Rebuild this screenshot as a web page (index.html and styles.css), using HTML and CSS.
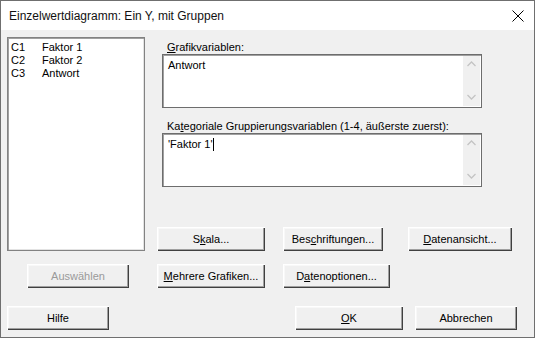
FILE: index.html
```html
<!DOCTYPE html>
<html lang="de">
<head>
<meta charset="utf-8">
<title>Einzelwertdiagramm</title>
<link rel="stylesheet" href="styles.css">
</head>
<body>
<div class="window">
  <div class="titlebar">
    <span class="title">Einzelwertdiagramm: Ein Y, mit Gruppen</span>
    <svg class="close" width="12" height="12" viewBox="0 0 12 12"><path d="M0.5 0.5 L11.5 11.5 M11.5 0.5 L0.5 11.5" stroke="#000" stroke-width="1" fill="none"/></svg>
  </div>
  <div class="content">
    <div class="main">
      <div class="left">
        <div class="listbox">
          <div class="item"><span class="col">C1</span><span>Faktor 1</span></div>
          <div class="item"><span class="col">C2</span><span>Faktor 2</span></div>
          <div class="item"><span class="col">C3</span><span>Antwort</span></div>
        </div>
        <button class="btn btn-select" disabled>Auswählen</button>
      </div>
      <div class="right">
        <div class="label label-first"><u>G</u>rafikvariablen:</div>
        <div class="field">
          <div class="field-text">Antwort</div>
          <div class="scroll">
            <svg width="9" height="6" viewBox="0 0 9 6"><path d="M0.5 5 L4.5 1 L8.5 5" stroke="#c4c4c4" stroke-width="1.3" fill="none"/></svg>
            <svg width="9" height="6" viewBox="0 0 9 6"><path d="M0.5 1 L4.5 5 L8.5 1" stroke="#c4c4c4" stroke-width="1.3" fill="none"/></svg>
          </div>
        </div>
        <div class="label label-second">Ka<u>t</u>egoriale Gruppierungsvariablen (1-4, äußerste zuerst):</div>
        <div class="field">
          <div class="field-text">'Faktor 1'<span class="caret"></span></div>
          <div class="scroll">
            <svg width="9" height="6" viewBox="0 0 9 6"><path d="M0.5 5 L4.5 1 L8.5 5" stroke="#c4c4c4" stroke-width="1.3" fill="none"/></svg>
            <svg width="9" height="6" viewBox="0 0 9 6"><path d="M0.5 1 L4.5 5 L8.5 1" stroke="#c4c4c4" stroke-width="1.3" fill="none"/></svg>
          </div>
        </div>
        <div class="btn-row row-one">
          <button class="btn w108">S<u>k</u>ala...</button>
          <button class="btn w100 gap18">Bes<u>c</u>hriftungen...</button>
          <button class="btn w104 gap25"><u>D</u>atenansicht...</button>
        </div>
        <div class="btn-row row-two">
          <button class="btn w108"><u>M</u>ehrere Grafiken...</button>
          <button class="btn w107 gap18">D<u>a</u>tenoptionen...</button>
        </div>
      </div>
    </div>
    <div class="footer">
      <button class="btn w102">Hilfe</button>
      <div class="footer-right">
        <button class="btn w108"><u>O</u>K</button>
        <button class="btn w102 gap12">Abbrechen</button>
      </div>
    </div>
  </div>
</div>
</body>
</html>
```

FILE: styles.css
```css
html, body {
  margin: 0;
  padding: 0;
  background: #f0f0f0;
}

.window {
  width: 535px;
  height: 338px;
  box-sizing: border-box;
  border: 1px solid #6f6f6f;
  background: #f0f0f0;
  display: flex;
  flex-direction: column;
  font-family: "Liberation Sans", Arial, sans-serif;
  font-size: 11px;
  color: #000;
}

.titlebar {
  height: 29px;
  flex: none;
  background: #fff;
  display: flex;
  align-items: center;
  justify-content: space-between;
  padding: 0 10px 0 8px;
}

.title {
  font-size: 12px;
  margin-top: 1px;
  color: #111;
}

.close {
  display: block;
  margin-top: 1px;
}

.content {
  flex: 1;
  display: flex;
  flex-direction: column;
  padding: 7px 0 0 6px;
}

.main {
  display: flex;
}

.left {
  width: 138px;
  display: flex;
  flex-direction: column;
}

.listbox {
  height: 214px;
  box-sizing: border-box;
  background: #fff;
  border: 1px solid #828282;
  box-shadow: inset 1px 1px 0 #a0a0a0, inset -1px -1px 0 #e3e3e3;
  padding: 3px 0 0 3px;
}

.item {
  display: flex;
  line-height: 13px;
  height: 13px;
}

.col {
  width: 31px;
}

.btn {
  font-family: "Liberation Sans", Arial, sans-serif;
  font-size: 11px;
  color: #000;
  height: 24px;
  padding: 0;
  margin: 0;
  background: #f0f0f0;
  border: none;
  border-radius: 0;
  box-shadow: inset 1px 1px 0 #ffffff, inset -1px -1px 0 #404040, inset -2px -2px 0 #a0a0a0, inset 2px 2px 0 #f8f8f8;
  text-align: center;
  flex: none;
}

.btn[disabled] {
  color: #9a9a9a;
}

.btn-select {
  width: 102px;
  margin: 13px 0 0 20px;
}

.w100 { width: 100px; }
.w102 { width: 102px; }
.w104 { width: 104px; }
.w107 { width: 107px; }
.w108 { width: 108px; }
.gap18 { margin-left: 18px; }
.gap25 { margin-left: 25px; }
.gap12 { margin-left: 12px; }

.right {
  margin-left: 12px;
  width: 360px;
  display: flex;
  flex-direction: column;
}

.label {
  line-height: 14px;
  height: 14px;
  padding-left: 10px;
  white-space: nowrap;
}

.label-first { margin-top: 3px; }
.label-second { margin-top: 11px; }

.field {
  margin-left: 5px;
  width: 320px;
  height: 54px;
  box-sizing: border-box;
  background: #fff;
  border: 1px solid #6d6d6d;
  box-shadow: inset 1px 1px 0 #a0a0a0;
  display: flex;
  justify-content: space-between;
}

.field-text {
  padding: 4px 0 0 5px;
  line-height: 13px;
  display: flex;
  align-items: flex-start;
}

.caret {
  display: inline-block;
  width: 1px;
  height: 13px;
  background: #000;
}

.scroll {
  width: 17px;
  margin: 1px 1px 1px 0;
  background: #f0f0f0;
  display: flex;
  flex-direction: column;
  justify-content: space-between;
  align-items: center;
  padding: 5px 0 6px;
  box-sizing: border-box;
}

.scroll svg {
  display: block;
}

.btn-row {
  display: flex;
}

.row-one { margin-top: 40px; }
.row-two { margin-top: 13px; }

.footer {
  display: flex;
  justify-content: space-between;
  margin-top: 18px;
  padding-right: 17px;
}

.footer-right {
  display: flex;
}

u {
  text-decoration: underline;
  text-underline-offset: 1px;
}
```
